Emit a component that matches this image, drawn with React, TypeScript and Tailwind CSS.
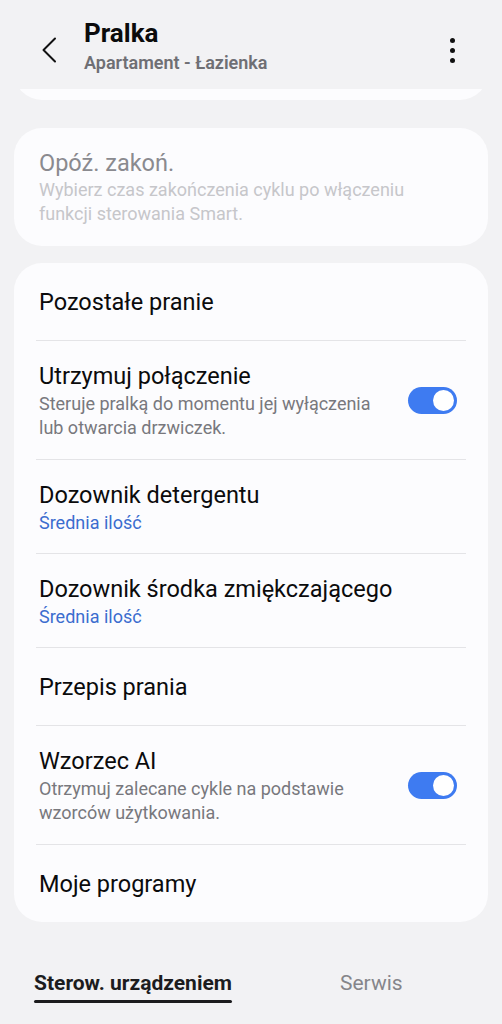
import React from "react";

const font = { fontFamily: "Roboto, 'Noto Sans', sans-serif" };

function Toggle() {
  return (
    <div className="w-[49px] h-[27px] rounded-full bg-[#3e7bf1] flex items-center justify-end pr-[3px] shrink-0">
      <div className="w-[21px] h-[21px] rounded-full bg-white" />
    </div>
  );
}

function Divider() {
  return <div className="mx-[22px] h-px bg-[#e4e4e7]" />;
}

function Row({
  title,
  desc,
  link,
  toggle,
}: {
  title: string;
  desc?: string[];
  link?: string;
  toggle?: boolean;
}) {
  return (
    <div className="flex items-center min-h-[77px] pl-[25px] pr-[31px] pt-[19px] pb-[19px]">
      <div className="flex-1 flex flex-col justify-center">
        <div className="text-[23.5px] leading-[32px] text-[#0b0b0c]">{title}</div>
        {desc && (
          <div className="text-[18px] leading-[24px] text-[#78787d]">
            {desc.map((d, i) => (
              <div key={i}>{d}</div>
            ))}
          </div>
        )}
        {link && <div className="text-[18px] leading-[23px] text-[#3b6dcf]">{link}</div>}
      </div>
      {toggle && <Toggle />}
    </div>
  );
}

export default function App() {
  return (
    <div className="w-[502px] h-[1024px] bg-[#f2f2f4] overflow-hidden flex flex-col" style={font}>
      {/* Header */}
      <div className="h-[89px] flex items-start">
        <div className="w-[84px] pt-[37px] pl-[40px]">
          <svg width="18" height="26" viewBox="0 0 18 26" fill="none">
            <path d="M15 1.5 L3.5 13 L15 24.5" stroke="#111" strokeWidth="2" strokeLinecap="round" strokeLinejoin="round" />
          </svg>
        </div>
        <div className="flex-1 pt-[16px]">
          <div className="text-[26px] leading-[35px] font-bold text-[#0b0b0c]">Pralka</div>
          <div className="text-[18px] leading-[24px] font-semibold text-[#6f6f74]">Apartament - Łazienka</div>
        </div>
        <div className="pt-[38px] pr-[47px] flex flex-col items-center gap-[5px]">
          <div className="w-[5px] h-[5px] rounded-full bg-[#111]" />
          <div className="w-[5px] h-[5px] rounded-full bg-[#111]" />
          <div className="w-[5px] h-[5px] rounded-full bg-[#111]" />
        </div>
      </div>

      {/* partially scrolled card */}
      <div className="mx-[14px] h-[11px] overflow-hidden">
        <div className="h-[60px] mt-[-49px] rounded-[28px] bg-[#fcfcfe]" />
      </div>

      {/* Disabled card */}
      <div className="mx-[14px] mt-[28px] rounded-[28px] bg-[#fcfcfe] pl-[25px] pr-[25px] pt-[20px] pb-[20px]">
        <div className="text-[23.5px] leading-[30px] text-[#8a8a8f]">Opóź. zakoń.</div>
        <div className="text-[18px] leading-[24px] text-[#c6c6ca]">
          <div>Wybierz czas zakończenia cyklu po włączeniu</div>
          <div>funkcji sterowania Smart.</div>
        </div>
      </div>

      {/* Main card */}
      <div className="mx-[14px] mt-[17px] rounded-[28px] bg-[#fcfcfe]">
        <Row title="Pozostałe pranie" />
        <Divider />
        <Row
          title="Utrzymuj połączenie"
          desc={["Steruje pralką do momentu jej wyłączenia", "lub otwarcia drzwiczek."]}
          toggle
        />
        <Divider />
        <Row title="Dozownik detergentu" link="Średnia ilość" />
        <Divider />
        <Row title="Dozownik środka zmiękczającego" link="Średnia ilość" />
        <Divider />
        <Row title="Przepis prania" />
        <Divider />
        <Row
          title="Wzorzec AI"
          desc={["Otrzymuj zalecane cykle na podstawie", "wzorców użytkowania."]}
          toggle
        />
        <Divider />
        <Row title="Moje programy" />
      </div>

      {/* Tabs */}
      <div className="flex items-start mt-[46px]">
        <div className="ml-[34px] flex flex-col">
          <div className="text-[21px] leading-[30px] font-bold text-[#1c1c1e]">Sterow. urządzeniem</div>
          <div className="h-[3px] mt-[2px] rounded-full bg-[#1c1c1e]" />
        </div>
        <div className="ml-[108px] text-[21px] leading-[30px] text-[#85858a]">Serwis</div>
      </div>
    </div>
  );
}
